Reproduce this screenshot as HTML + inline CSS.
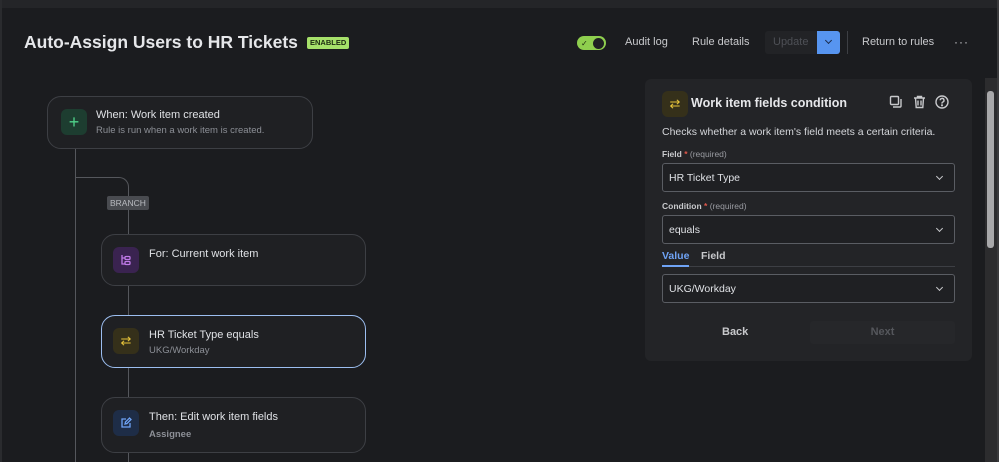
<!DOCTYPE html>
<html><head><meta charset="utf-8"><style>
*{box-sizing:border-box;margin:0;padding:0}
body{width:999px;height:462px;overflow:hidden;background:#1b1c1f;font-family:"Liberation Sans",sans-serif;color:#dfe1e5;position:relative}
.a{position:absolute}
.card{position:absolute;border:1px solid #3d3f44;border-radius:14px;background:#1f2023}
.ic{position:absolute;width:26px;height:26px;border-radius:6px;display:flex;align-items:center;justify-content:center}
.t{position:absolute;font-size:11px;color:#dfe1e5}
.s{position:absolute;font-size:9.5px;color:#8c8f96}
.sel{position:absolute;left:662px;width:293px;height:29px;border:1px solid #5a5d63;border-radius:3px;background:#1f2023;font-size:10.5px;padding:8px 0 0 6px;color:#dfe1e5}
.sel:after{content:"";position:absolute;right:12px;top:10px;width:4px;height:4px;border-right:1.5px solid #c8c9cc;border-bottom:1.5px solid #c8c9cc;transform:rotate(45deg)}
.lab{position:absolute;left:662px;font-size:8.5px;color:#c8c9cc;font-weight:bold}
.lab b{color:#e0574a}.lab span{font-weight:normal;color:#9a9ca2}
.nav{position:absolute;top:36px;font-size:11px;color:#c8c9cc}
</style></head><body>
<div class="a" style="left:0;top:0;width:999px;height:8px;background:#242528"></div>
<div class="a" style="left:0;top:0;width:2px;height:462px;background:#2a2b2e"></div>
<div class="a" style="left:24px;top:32px;font-size:17.5px;font-weight:bold;color:#e6e7ea">Auto-Assign Users to HR Tickets</div>
<div class="a" style="left:307px;top:37px;height:12px;padding:0 3px;background:#a6e06a;color:#1c2a10;font-size:7.5px;font-weight:bold;line-height:12px;border-radius:2px">ENABLED</div>
<div class="a" style="left:577px;top:36px;width:29px;height:14px;border-radius:7px;background:#8fcf4e"></div>
<div class="a" style="left:593px;top:38px;width:11px;height:11px;border-radius:50%;background:#1f2023"></div>
<div class="a" style="left:581px;top:39px;font-size:8px;color:#1c2a10">✓</div>
<div class="nav" style="left:625px">Audit log</div>
<div class="nav" style="left:692px">Rule details</div>
<div class="a" style="left:765px;top:31px;width:52px;height:23px;background:#222326;border-radius:3px 0 0 3px;color:#4e5056;font-size:11px;padding:5px 0 0 8px">Update</div>
<div class="a" style="left:817px;top:31px;width:23px;height:23px;background:#5795f0;border-radius:0 3px 3px 0"></div>
<div class="a" style="left:826px;top:38px;width:5px;height:5px;border-right:1.5px solid #1b2d4d;border-bottom:1.5px solid #1b2d4d;transform:rotate(45deg)"></div>
<div class="a" style="left:847px;top:31px;width:1px;height:23px;background:#3d3f44"></div>
<div class="nav" style="left:862px">Return to rules</div>
<div class="a" style="left:954px;top:35px;font-size:12px;color:#c8c9cc;letter-spacing:1px">···</div>

<div class="a" style="left:75px;top:148px;width:1px;height:314px;background:#55575c"></div>
<div class="a" style="left:75px;top:177px;width:54px;height:40px;border-top:1px solid #55575c;border-right:1px solid #55575c;border-top-right-radius:10px"></div>
<div class="a" style="left:128px;top:205px;width:1px;height:257px;background:#55575c"></div>
<div class="a" style="left:107px;top:196px;height:14px;padding:0 3px;background:#494b50;color:#b9bbc0;font-size:8.5px;line-height:14px;border-radius:2px">BRANCH</div>

<div class="card" style="left:47px;top:96px;width:266px;height:53px"></div>
<div class="ic" style="left:61px;top:109px;background:#1d3d30;color:#4fd28a;font-size:18px">+</div>
<div class="t" style="left:96px;top:109px">When: Work item created</div>
<div class="s" style="left:96px;top:125px">Rule is run when a work item is created.</div>

<div class="card" style="left:101px;top:234px;width:265px;height:52px"></div>
<div class="ic" style="left:113px;top:247px;background:#3a2350"><svg width="12" height="12" viewBox="0 0 12 12" fill="none" stroke="#c07ae8" stroke-width="1.3"><path d="M2 1v9h3M2 4h3"/><rect x="5" y="2.5" width="5" height="3" rx="1"/><rect x="5" y="7.5" width="5" height="3" rx="1"/></svg></div>
<div class="t" style="left:149px;top:248px">For: Current work item</div>

<div class="card" style="left:101px;top:315px;width:265px;height:53px;border:1.5px solid #9cbef0"></div>
<div class="ic" style="left:113px;top:328px;background:#35301a;color:#e8c53a;font-size:13px">⇄</div>
<div class="t" style="left:149px;top:329px">HR Ticket Type equals</div>
<div class="s" style="left:149px;top:345px">UKG/Workday</div>

<div class="card" style="left:101px;top:397px;width:265px;height:56px"></div>
<div class="ic" style="left:113px;top:410px;background:#1e2d47"><svg width="12" height="12" viewBox="0 0 12 12" fill="none" stroke="#6fa3f5" stroke-width="1.3"><path d="M6 2H2v8h8V6"/><path d="M5 7l.5-2L9.5 1 11 2.5 7 6.5z"/></svg></div>
<div class="t" style="left:149px;top:411px">Then: Edit work item fields</div>
<div class="s" style="left:149px;top:429px;font-weight:bold">Assignee</div>

<div class="a" style="left:645px;top:79px;width:327px;height:282px;background:#232427;border-radius:6px"></div>
<div class="ic" style="left:662px;top:91px;background:#35301a;color:#e8c53a;font-size:13px">⇄</div>
<div class="a" style="left:691px;top:96px;font-size:12.5px;font-weight:bold;color:#e6e7ea">Work item fields condition</div>
<svg class="a" style="left:889px;top:95px" width="14" height="14" viewBox="0 0 14 14" fill="none" stroke="#c8c9cc" stroke-width="1.4"><rect x="1.5" y="1.5" width="8" height="8" rx="1"/><path d="M12 4v7a1 1 0 0 1-1 1H4"/></svg>
<svg class="a" style="left:913px;top:95px" width="13" height="14" viewBox="0 0 13 14" fill="none" stroke="#c8c9cc" stroke-width="1.4"><path d="M1 3h11M4.5 3V1.5h4V3M2.5 3l.7 9.5h6.6l.7-9.5M5 5.5v5M8 5.5v5"/></svg>
<svg class="a" style="left:935px;top:95px" width="14" height="14" viewBox="0 0 14 14" fill="none" stroke="#c8c9cc" stroke-width="1.4"><circle cx="7" cy="7" r="6"/><path d="M5.2 5.3a1.9 1.9 0 1 1 2.5 1.8c-.5.2-.7.6-.7 1.1v.4"/><circle cx="7" cy="10.3" r=".4" fill="#c8c9cc"/></svg>
<div class="a" style="left:662px;top:126px;font-size:10.5px;color:#d4d6da">Checks whether a work item's field meets a certain criteria.</div>
<div class="lab" style="top:149px">Field <b>*</b> <span>(required)</span></div>
<div class="sel" style="top:163px">HR Ticket Type</div>
<div class="lab" style="top:201px">Condition <b>*</b> <span>(required)</span></div>
<div class="sel" style="top:215px">equals</div>
<div class="a" style="left:662px;top:250px;font-size:10.5px;font-weight:bold;color:#6fa3f5">Value</div>
<div class="a" style="left:701px;top:250px;font-size:10.5px;font-weight:bold;color:#c8c9cc">Field</div>
<div class="a" style="left:662px;top:266px;width:293px;height:1px;background:#3d3f44"></div>
<div class="a" style="left:662px;top:265px;width:27px;height:2px;background:#6fa3f5"></div>
<div class="sel" style="top:274px">UKG/Workday</div>
<div class="a" style="left:722px;top:326px;font-size:11px;font-weight:bold;color:#c8c9cc">Back</div>
<div class="a" style="left:810px;top:321px;width:145px;height:23px;background:#26272a;border-radius:3px;color:#55575c;font-size:11px;font-weight:bold;text-align:center;line-height:23px">Next</div>

<div class="a" style="left:985px;top:78px;width:12px;height:384px;background:#2c2c2e"></div>
<div class="a" style="left:987px;top:91px;width:7px;height:157px;background:#a8a8aa;border-radius:3px"></div>
<div class="a" style="left:997px;top:0;width:2px;height:462px;background:#3a3a3c"></div>
</body></html>
